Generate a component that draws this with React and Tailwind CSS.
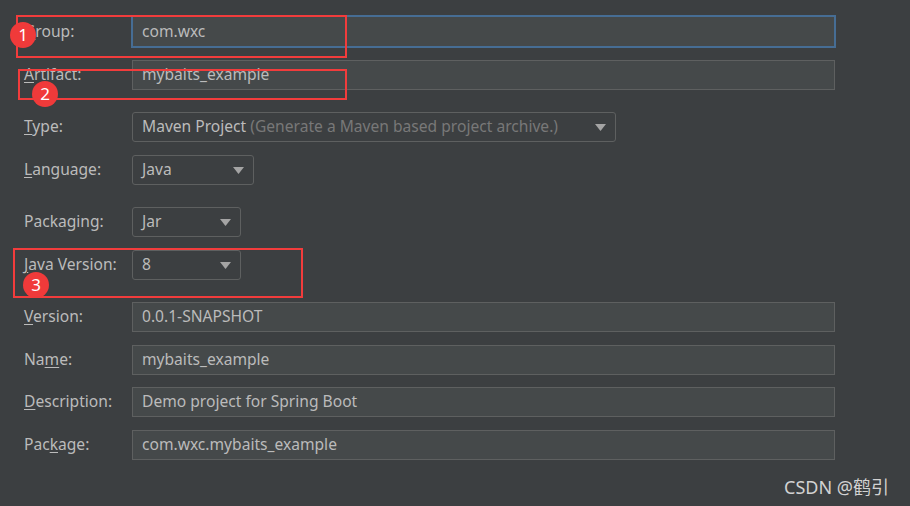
import React from "react";

const font = { fontFamily: '"Noto Sans", "Noto Sans CJK SC", sans-serif' };

function Label({ text, u }) {
  // u = index of the mnemonic letter to underline
  return (
    <div className="w-[132px] shrink-0 pl-[24px] whitespace-nowrap text-[15.6px] text-[#bbbbbb]">
      {u == null ? (
        text
      ) : (
        <>
          {text.slice(0, u)}
          <span className="underline underline-offset-2">{text[u]}</span>
          {text.slice(u + 1)}
        </>
      )}
    </div>
  );
}

function TextField({ value, focused }) {
  return (
    <div
      className={
        focused
          ? "flex items-center h-[33px] w-[705px] -ml-[1px] border-2 border-[#466d94] bg-[#45494a] pl-[9px] text-[15.6px] text-[#bbbbbb]"
          : "flex items-center h-[30px] w-[703px] border border-[#5e6060] bg-[#45494a] pl-[9px] text-[15.6px] text-[#bbbbbb]"
      }
    >
      {value}
    </div>
  );
}

function Arrow() {
  return (
    <svg width="11" height="7" viewBox="0 0 11 7" className="shrink-0">
      <path d="M0 0 L11 0 L5.5 7 Z" fill="#a4a4a4" />
    </svg>
  );
}

function Combo({ value, hint, width }) {
  return (
    <div
      className={`flex items-center justify-between h-[30px] ${width} rounded-[3px] border border-[#5e6060] bg-[#3c3f41] pl-[9px] pr-[9px] whitespace-nowrap text-[15.6px] text-[#bbbbbb]`}
    >
      <span>
        {value}
        {hint && <span className="text-[#787878]"> {hint}</span>}
      </span>
      <Arrow />
    </div>
  );
}

function Row({ className, children }) {
  return <div className={`flex items-center ${className}`}>{children}</div>;
}

function Badge({ n, className }) {
  return (
    <div
      className={`absolute flex items-center justify-center w-[26px] h-[26px] rounded-full bg-[#f03a3a] text-white text-[17px] ${className}`}
    >
      {n}
    </div>
  );
}

export default function App() {
  return (
    <div className="relative w-[910px] h-[506px] bg-[#3c3f41] overflow-hidden" style={font}>
      <div className="flex flex-col pt-[15px]">
        <Row className="h-[33px]">
          <Label text="Group:" u={0} />
          <TextField value="com.wxc" focused />
        </Row>
        <Row className="mt-[12px] h-[30px]">
          <Label text="Artifact:" u={0} />
          <TextField value="mybaits_example" />
        </Row>
        <Row className="mt-[22px] h-[30px]">
          <Label text="Type:" u={0} />
          <Combo
            value="Maven Project"
            hint="(Generate a Maven based project archive.)"
            width="w-[484px]"
          />
        </Row>
        <Row className="mt-[13px] h-[30px]">
          <Label text="Language:" u={0} />
          <Combo value="Java" width="w-[122px]" />
        </Row>
        <Row className="mt-[22px] h-[30px]">
          <Label text="Packaging:" />
          <Combo value="Jar" width="w-[109px]" />
        </Row>
        <Row className="mt-[13px] h-[30px]">
          <Label text="Java Version:" u={0} />
          <Combo value="8" width="w-[109px]" />
        </Row>
        <Row className="mt-[22px] h-[30px]">
          <Label text="Version:" u={0} />
          <TextField value="0.0.1-SNAPSHOT" />
        </Row>
        <Row className="mt-[13px] h-[30px]">
          <Label text="Name:" u={2} />
          <TextField value="mybaits_example" />
        </Row>
        <Row className="mt-[12px] h-[30px]">
          <Label text="Description:" u={0} />
          <TextField value="Demo project for Spring Boot" />
        </Row>
        <Row className="mt-[13px] h-[30px]">
          <Label text="Package:" u={3} />
          <TextField value="com.wxc.mybaits_example" />
        </Row>
      </div>

      {/* annotations */}
      <div className="absolute left-[16px] top-[15px] w-[331px] h-[43px] border-2 border-[#f23c3c]" />
      <div className="absolute left-[18px] top-[69px] w-[329px] h-[31px] border-2 border-[#f23c3c]" />
      <div className="absolute left-[13px] top-[248px] w-[290px] h-[50px] border-2 border-[#f23c3c]" />
      <Badge n="1" className="left-[10px] top-[22px]" />
      <Badge n="2" className="left-[32px] top-[81px]" />
      <Badge n="3" className="left-[23px] top-[272px]" />

      <div className="absolute left-[784px] top-[474px] text-[18px] text-[#d2d2d2]">
        CSDN @鹤引
      </div>
    </div>
  );
}
